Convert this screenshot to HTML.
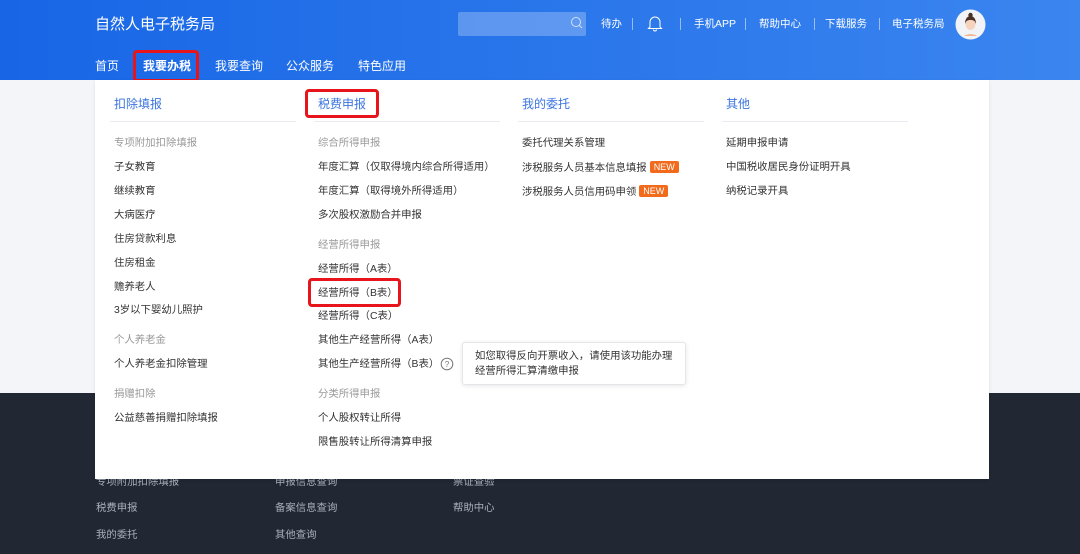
<!DOCTYPE html>
<html><head><meta charset="utf-8"><style>
*{margin:0;padding:0;box-sizing:border-box}
body{width:1080px;height:554px;overflow:hidden;position:relative;font-family:"Liberation Sans","Noto Sans CJK SC",sans-serif;background:#f3f5f9}
.hdr{position:absolute;left:0;top:0;width:1080px;height:80px;background:linear-gradient(90deg,#1866e6,#3a85ef)}
.a{position:absolute;white-space:nowrap;line-height:14px}
.foot{position:absolute;left:0;top:393px;width:1080px;height:161px;background:#212733}
.panel{position:absolute;left:95px;top:80px;width:894px;height:399px;background:#fff;box-shadow:0 1px 3px rgba(0,0,0,.1)}
.t{font-size:10.4px;color:#333}
.g{font-size:10.4px;color:#999}
.h{font-size:12px;color:#3b74e0}
.ln{position:absolute;height:1px;background:#e8ebf0;width:186px;top:121px}
.fx{font-size:10.4px;color:#a9afba}
.new{display:inline-block;background:#f26a1b;color:#fff;font-size:9px;line-height:12px;padding:0 4px;border-radius:2px;margin-left:3px;vertical-align:1px}
.red{position:absolute;border:3px solid #e8141c;border-radius:4px}
.w{color:#fff;font-size:10.5px}
.sep{position:absolute;width:1px;height:12px;background:rgba(255,255,255,.5);top:18px}
</style></head><body>
<div class="hdr"></div>
<div class="a" style="left:95px;top:16px;font-size:15px;line-height:18px;color:#fff">自然人电子税务局</div>
<div class="a" style="left:458px;top:12px;width:128px;height:24px;background:rgba(255,255,255,.25);border-radius:2px"></div>
<svg class="a" style="left:570px;top:16px" width="14" height="14" viewBox="0 0 14 14"><circle cx="6" cy="6" r="4.5" fill="none" stroke="rgba(255,255,255,.7)" stroke-width="1"/><path d="M9.3 9.3L12 12" stroke="rgba(255,255,255,.7)"/></svg>
<div class="a w" style="left:601px;top:17px">待办</div>
<div class="sep" style="left:632px"></div>
<svg class="a" style="left:647px;top:14px" width="16" height="18" viewBox="0 0 16 18"><path d="M3 13V8a5 5 0 0 1 10 0v5l1.5 1.5h-13Z M6.5 15.5a1.5 1.5 0 0 0 3 0" fill="none" stroke="#fff" stroke-width="1"/></svg>
<div class="sep" style="left:680px"></div>
<div class="a w" style="left:694px;top:17px">手机APP</div>
<div class="sep" style="left:745px"></div>
<div class="a w" style="left:759px;top:17px">帮助中心</div>
<div class="sep" style="left:814px"></div>
<div class="a w" style="left:825px;top:17px">下载服务</div>
<div class="sep" style="left:879px"></div>
<div class="a w" style="left:892px;top:17px">电子税务局</div>
<svg class="a" style="left:955px;top:9px" width="31" height="31" viewBox="0 0 31 31"><circle cx="15.5" cy="15.5" r="15" fill="#f2f3f7"/><path d="M9 27a9 6 0 0 1 13 0Z" fill="#f0b490"/><ellipse cx="15.5" cy="15" rx="5" ry="6" fill="#f6d3bd"/><path d="M10 15c0-6 3-8 5.5-8s5.5 2 5.5 8c-1-3-2-4-5.5-4s-4.5 1-5.5 4Z" fill="#4a2f24"/><circle cx="15.5" cy="6" r="2.2" fill="#4a2f24"/></svg>
<div class="a w" style="left:95px;top:59px;font-size:12px">首页</div>
<div class="a w" style="left:143px;top:59px;font-size:12px;font-weight:bold">我要办税</div>
<div class="a w" style="left:215px;top:59px;font-size:12px">我要查询</div>
<div class="a w" style="left:286px;top:59px;font-size:12px">公众服务</div>
<div class="a w" style="left:358px;top:59px;font-size:12px">特色应用</div>
<div class="red" style="left:133px;top:50px;width:66px;height:32px"></div>

<div class="foot"></div>
<div class="a fx" style="left:96px;top:476px">专项附加扣除填报</div>
<div class="a fx" style="left:275px;top:476px">申报信息查询</div>
<div class="a fx" style="left:453px;top:476px">票证查验</div>
<div class="a fx" style="left:96px;top:502px">税费申报</div>
<div class="a fx" style="left:275px;top:502px">备案信息查询</div>
<div class="a fx" style="left:453px;top:502px">帮助中心</div>
<div class="a fx" style="left:96px;top:529px">我的委托</div>
<div class="a fx" style="left:275px;top:529px">其他查询</div>

<div class="panel"></div>
<div class="a h" style="left:114px;top:97px">扣除填报</div>
<div class="a h" style="left:318px;top:97px">税费申报</div>
<div class="a h" style="left:522px;top:97px">我的委托</div>
<div class="a h" style="left:726px;top:97px">其他</div>
<div class="ln" style="left:110px"></div><div class="ln" style="left:314px"></div><div class="ln" style="left:518px"></div><div class="ln" style="left:722px"></div>
<div class="red" style="left:305px;top:89px;width:74px;height:29px"></div>

<div class="a g" style="left:114px;top:137px">专项附加扣除填报</div>
<div class="a t" style="left:114px;top:161px">子女教育</div>
<div class="a t" style="left:114px;top:185px">继续教育</div>
<div class="a t" style="left:114px;top:209px">大病医疗</div>
<div class="a t" style="left:114px;top:233px">住房贷款利息</div>
<div class="a t" style="left:114px;top:257px">住房租金</div>
<div class="a t" style="left:114px;top:281px">赡养老人</div>
<div class="a t" style="left:114px;top:304px">3岁以下婴幼儿照护</div>
<div class="a g" style="left:114px;top:334px">个人养老金</div>
<div class="a t" style="left:114px;top:358px">个人养老金扣除管理</div>
<div class="a g" style="left:114px;top:388px">捐赠扣除</div>
<div class="a t" style="left:114px;top:412px">公益慈善捐赠扣除填报</div>

<div class="a g" style="left:318px;top:137px">综合所得申报</div>
<div class="a t" style="left:318px;top:161px">年度汇算（仅取得境内综合所得适用）</div>
<div class="a t" style="left:318px;top:185px">年度汇算（取得境外所得适用）</div>
<div class="a t" style="left:318px;top:209px">多次股权激励合并申报</div>
<div class="a g" style="left:318px;top:239px">经营所得申报</div>
<div class="a t" style="left:318px;top:263px">经营所得（A表）</div>
<div class="a t" style="left:318px;top:287px">经营所得（B表）</div>
<div class="a t" style="left:318px;top:310px">经营所得（C表）</div>
<div class="a t" style="left:318px;top:334px">其他生产经营所得（A表）</div>
<div class="a t" style="left:318px;top:358px">其他生产经营所得（B表）</div>
<svg class="a" style="left:440px;top:357px" width="14" height="14" viewBox="0 0 14 14"><circle cx="7" cy="7" r="5.8" fill="none" stroke="#777" stroke-width="1"/><text x="7" y="10" font-size="8" text-anchor="middle" fill="#777" font-family="Liberation Sans">?</text></svg>
<div class="a g" style="left:318px;top:388px">分类所得申报</div>
<div class="a t" style="left:318px;top:412px">个人股权转让所得</div>
<div class="a t" style="left:318px;top:436px">限售股转让所得清算申报</div>
<div class="red" style="left:308px;top:278px;width:93px;height:29px"></div>

<div class="a" style="left:462px;top:342px;width:224px;height:43px;background:#fff;border:1px solid #e4e6ea;border-radius:3px;box-shadow:0 1px 4px rgba(0,0,0,.1)"></div>
<div class="a t" style="left:475px;top:349px;line-height:15px">如您取得反向开票收入，请使用该功能办理<br>经营所得汇算清缴申报</div>

<div class="a t" style="left:522px;top:137px">委托代理关系管理</div>
<div class="a t" style="left:522px;top:161px">涉税服务人员基本信息填报<span class="new">NEW</span></div>
<div class="a t" style="left:522px;top:185px">涉税服务人员信用码申领<span class="new">NEW</span></div>
<div class="a t" style="left:726px;top:137px">延期申报申请</div>
<div class="a t" style="left:726px;top:161px">中国税收居民身份证明开具</div>
<div class="a t" style="left:726px;top:185px">纳税记录开具</div>
</body></html>
